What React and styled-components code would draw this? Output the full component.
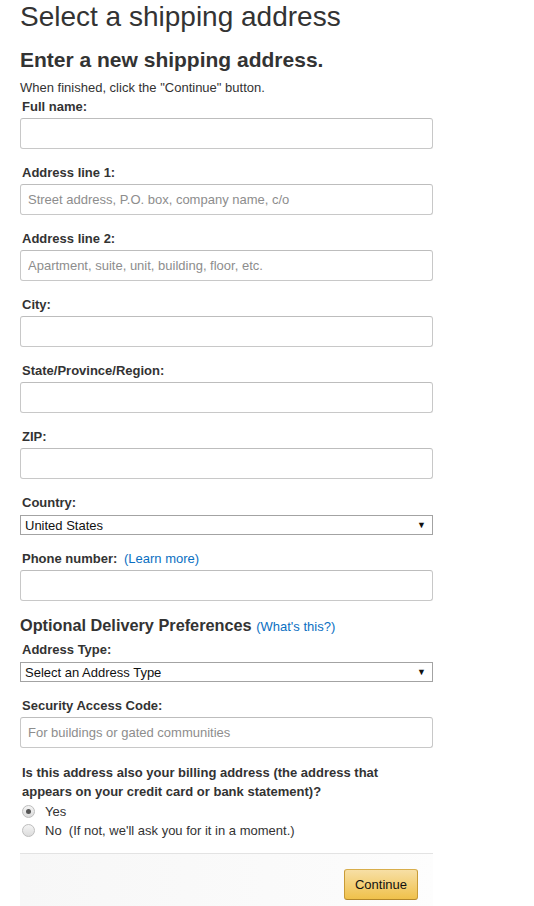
import React from 'react';
import styled, { createGlobalStyle } from 'styled-components';

const GlobalStyle = createGlobalStyle`
    body {
        margin: 0;
        background: #fff;
        font-family: "Liberation Sans", Arial, sans-serif;
        color: #333;
    }
`;

const Page = styled.div`
    width: 413px;
    padding: 0 0 0 20px;
`;

const Title = styled.h1`
    margin: 0;
    font-size: 28px;
    font-weight: normal;
    line-height: 34px;
    color: #333;
`;

const SubTitle = styled.h2`
    margin: 12px 0 0;
    font-size: 21px;
    font-weight: bold;
    line-height: 28px;
    color: #333;
`;

const Hint = styled.p`
    margin: 5px 0 0;
    font-size: 13px;
    line-height: 17px;
    color: #333;
`;

const Field = styled.div`
    margin-top: ${p => p.$gap || 0}px;
`;

const Label = styled.label`
    display: block;
    padding-left: 2px;
    margin-bottom: ${p => p.$mb || 3}px;
    font-size: 13px;
    line-height: 17px;
    font-weight: bold;
    color: #333;
`;

const LinkText = styled.a`
    font-weight: normal;
    font-size: 13px;
    color: #0a6fc2;
    text-decoration: none;
    margin-left: ${p => p.$ml || 0}px;
`;

const Input = styled.input`
    display: block;
    box-sizing: border-box;
    width: 413px;
    height: 31px;
    padding: 0 7px;
    border: 1px solid #c8c8c8;
    border-top-color: #bdbdbd;
    border-radius: 3px;
    font-family: "Liberation Sans", Arial, sans-serif;
    font-size: 13px;
    color: #333;
    &::placeholder {
        color: #8d8d8d;
    }
`;

const Select = styled.div`
    box-sizing: border-box;
    width: 413px;
    height: 20px;
    display: flex;
    align-items: center;
    justify-content: space-between;
    padding: 0 6px 0 4px;
    border: 1px solid #a3a3a3;
    font-size: 13px;
    color: #111;
`;

const Arrow = styled.span`
    font-size: 9px;
    color: #111;
`;

const SectionTitle = styled.h3`
    margin: 13px 0 0;
    font-size: 16.3px;
    line-height: 22px;
    font-weight: bold;
    color: #333;
`;

const Question = styled.p`
    width: 390px;
    margin: 15px 0 1px;
    padding-left: 2px;
    font-size: 13px;
    line-height: 19px;
    font-weight: bold;
    color: #333;
`;

const RadioRow = styled.div`
    display: flex;
    align-items: center;
    height: 19px;
    padding-left: 2px;
    font-size: 13px;
    color: #333;
`;

const Radio = styled.span`
    box-sizing: border-box;
    width: 13px;
    height: 13px;
    border-radius: 50%;
    border: 1px solid #bdbdbd;
    background: linear-gradient(#f4f4f4, #dcdcdc);
    margin-right: 10px;
    display: flex;
    align-items: center;
    justify-content: center;
    &::after {
        content: "";
        width: 5px;
        height: 5px;
        border-radius: 50%;
        background: ${p => (p.$checked ? '#555' : 'transparent')};
    }
`;

const Footer = styled.div`
    margin-top: 13px;
    width: 413px;
    height: 60px;
    border-top: 1px solid #e3e3e3;
    background: linear-gradient(90deg, #f7f7f7, #fbfbfb 80%, #fdfdfd);
    display: flex;
    justify-content: flex-end;
    align-items: flex-start;
    padding-top: 15px;
    box-sizing: border-box;
`;

const Button = styled.button`
    box-sizing: border-box;
    width: 74px;
    height: 31px;
    margin-right: 15px;
    border: 1px solid #c89b36;
    border-color: #d8ae4c #c89b36 #b3872b;
    border-radius: 3px;
    background: linear-gradient(#f7dfa5, #f0c14b);
    font-family: "Liberation Sans", Arial, sans-serif;
    font-size: 13px;
    color: #111;
    cursor: pointer;
`;

const App = () => {
    return (
        <Page>
            <GlobalStyle />
            <Title>Select a shipping address</Title>
            <SubTitle>Enter a new shipping address.</SubTitle>
            <Hint>When finished, click the "Continue" button.</Hint>

            <Field $gap={2}>
                <Label>Full name:</Label>
                <Input type="text" />
            </Field>
            <Field $gap={15}>
                <Label>Address line 1:</Label>
                <Input type="text" placeholder="Street address, P.O. box, company name, c/o" />
            </Field>
            <Field $gap={15}>
                <Label>Address line 2:</Label>
                <Input type="text" placeholder="Apartment, suite, unit, building, floor, etc." />
            </Field>
            <Field $gap={15}>
                <Label>City:</Label>
                <Input type="text" />
            </Field>
            <Field $gap={15}>
                <Label>State/Province/Region:</Label>
                <Input type="text" />
            </Field>
            <Field $gap={15}>
                <Label>ZIP:</Label>
                <Input type="text" />
            </Field>
            <Field $gap={15}>
                <Label $mb={4}>Country:</Label>
                <Select>
                    <span>United States</span>
                    <Arrow>▼</Arrow>
                </Select>
            </Field>
            <Field $gap={15}>
                <Label>
                    Phone number: <LinkText href="#" $ml={3}>(Learn more)</LinkText>
                </Label>
                <Input type="text" />
            </Field>

            <SectionTitle>
                Optional Delivery Preferences <LinkText href="#">(What's this?)</LinkText>
            </SectionTitle>
            <Field $gap={3}>
                <Label $mb={4}>Address Type:</Label>
                <Select>
                    <span>Select an Address Type</span>
                    <Arrow>▼</Arrow>
                </Select>
            </Field>
            <Field $gap={15}>
                <Label>Security Access Code:</Label>
                <Input type="text" placeholder="For buildings or gated communities" />
            </Field>

            <Question>
                Is this address also your billing address (the address that appears on your credit card or bank statement)?
            </Question>
            <RadioRow>
                <Radio $checked />
                Yes
            </RadioRow>
            <RadioRow>
                <Radio />
                No&nbsp; (If not, we'll ask you for it in a moment.)
            </RadioRow>

            <Footer>
                <Button type="button">Continue</Button>
            </Footer>
        </Page>
    );
};

export default App;
